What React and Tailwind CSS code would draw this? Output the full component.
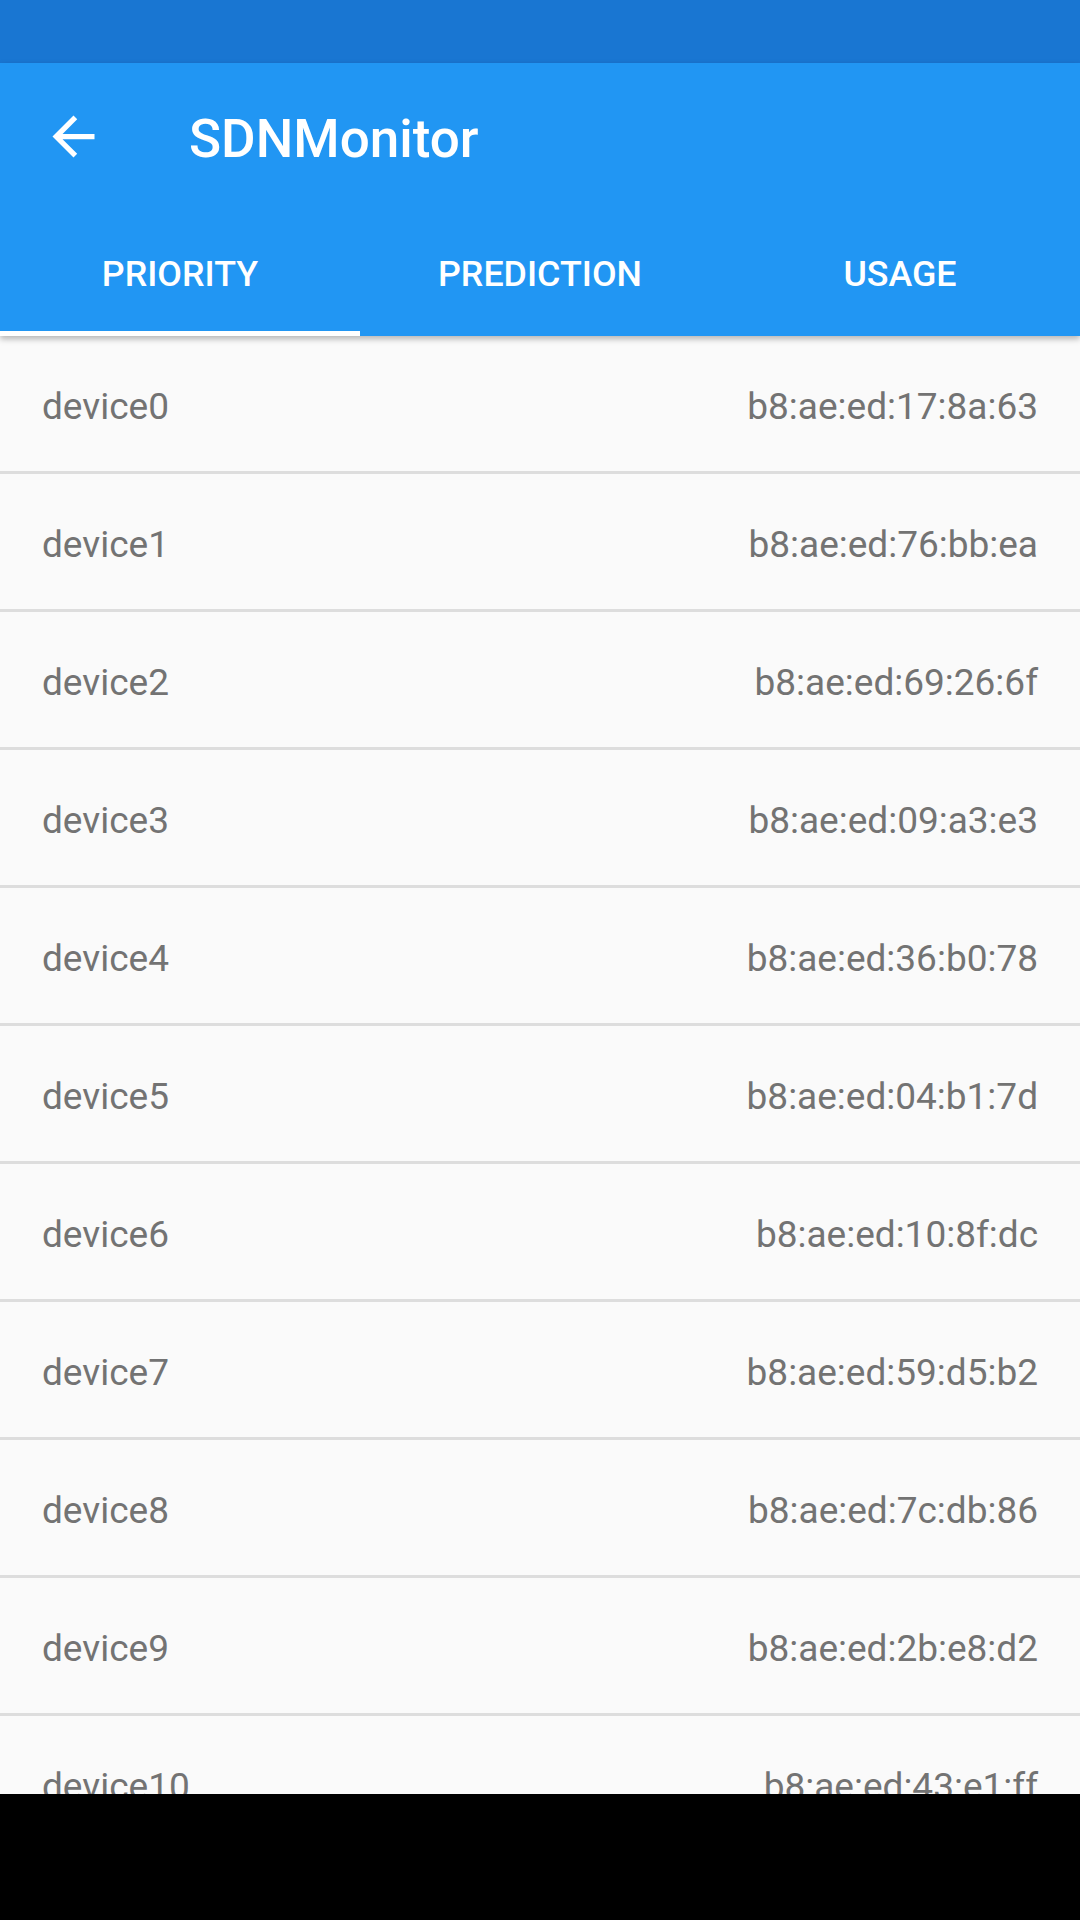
import React from "react"

const devices = [
    ["device0", "b8:ae:ed:17:8a:63"],
    ["device1", "b8:ae:ed:76:bb:ea"],
    ["device2", "b8:ae:ed:69:26:6f"],
    ["device3", "b8:ae:ed:09:a3:e3"],
    ["device4", "b8:ae:ed:36:b0:78"],
    ["device5", "b8:ae:ed:04:b1:7d"],
    ["device6", "b8:ae:ed:10:8f:dc"],
    ["device7", "b8:ae:ed:59:d5:b2"],
    ["device8", "b8:ae:ed:7c:db:86"],
    ["device9", "b8:ae:ed:2b:e8:d2"],
    ["device10", "b8:ae:ed:43:e1:ff"],
]

const tabs = ["PRIORITY", "PREDICTION", "USAGE"]

const BackArrow = () => (
    <svg width="63" height="63" viewBox="0 0 24 24" fill="#FFFFFF">
        <path d="M20 11H7.83l5.59-5.59L12 4l-8 8 8 8 1.41-1.41L7.83 13H20v-2z" />
    </svg>
)

const App = () => {
    return (
        <div
            className="w-[1080px] h-[1920px] flex flex-col overflow-hidden bg-[#FAFAFA]"
            style={{ fontFamily: "Roboto, 'Noto Sans', sans-serif" }}
        >
            {/* status bar */}
            <div className="h-[63px] shrink-0 bg-[#1976D2]" />

            {/* app bar + tabs */}
            <div className="relative z-10 shrink-0 bg-[#2196F3] shadow-[0_3px_6px_rgba(0,0,0,0.28)]">
                <div className="h-[147px] flex items-center">
                    <div className="ml-[42px] w-[63px] h-[63px] flex items-center justify-center">
                        <BackArrow />
                    </div>
                    <h1 className="ml-[84px] pt-[5px] text-white text-[53px] font-medium leading-none">SDNMonitor</h1>
                </div>
                <div className="h-[126px] flex">
                    {tabs.map((t, i) => (
                        <div key={t} className="relative flex-1 flex items-center justify-center pt-[3px]">
                            <span className="text-white text-[35.8px] font-medium leading-none">{t}</span>
                            {i === 0 && <div className="absolute left-0 right-0 bottom-0 h-[5px] bg-white" />}
                        </div>
                    ))}
                </div>
            </div>

            {/* device list */}
            <div className="flex-1 overflow-hidden">
                {devices.map(([name, mac]) => (
                    <div
                        key={name}
                        className="h-[138px] box-border border-b-[3px] border-[#DDDDDD] flex items-center justify-between px-[42px] pt-[5px] text-[#737373] text-[37px] leading-none"
                    >
                        <span>{name}</span>
                        <span>{mac}</span>
                    </div>
                ))}
            </div>

            {/* nav bar */}
            <div className="h-[126px] shrink-0 bg-black" />
        </div>
    )
}

export default App
